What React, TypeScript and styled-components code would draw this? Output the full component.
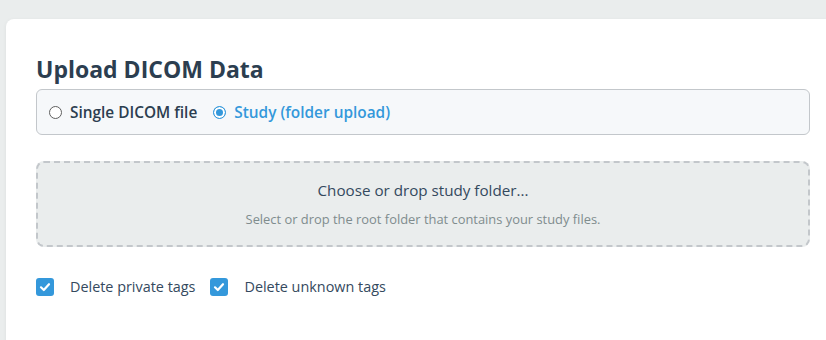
import React from "react";
import styled, { createGlobalStyle } from "styled-components";

const Global = createGlobalStyle`
  html, body { margin: 0; padding: 0; background: #eaeded; }
  body { font-family: "Open Sans", "Noto Sans", sans-serif; color: #2c3e50; }
`;

const Page = styled.div`
  padding: 19px 0 0 6px;
  height: 340px;
  box-sizing: border-box;
  overflow: hidden;
`;

const Card = styled.div`
  background: #ffffff;
  border-radius: 8px 0 0 0;
  box-shadow: 0 1px 4px rgba(0, 0, 0, 0.06);
  padding: 36px 16px 60px 30px;
  min-height: 400px;
  box-sizing: border-box;
`;

const Title = styled.h2`
  margin: 0 0 6px;
  font-size: 23px;
  font-weight: 700;
  line-height: 28px;
  color: #2c3e50;
`;

const ModeBox = styled.div`
  display: flex;
  align-items: center;
  gap: 16px;
  height: 46px;
  box-sizing: border-box;
  padding: 0 12px;
  border: 1px solid #c3c7cb;
  border-radius: 6px;
  background: #f6f8fa;
`;

const RadioLabel = styled.label<{ $active?: boolean }>`
  display: flex;
  align-items: center;
  gap: 8px;
  font-size: 15.4px;
  font-weight: 600;
  color: ${(p) => (p.$active ? "#3498db" : "#2c3e50")};
`;

const RadioDot = styled.span<{ $checked?: boolean }>`
  width: 13px;
  height: 13px;
  border-radius: 50%;
  box-sizing: border-box;
  border: 1px solid ${(p) => (p.$checked ? "#3498db" : "#5f5f5f")};
  background: ${(p) => (p.$checked ? "#3498db" : "#fff")};
  box-shadow: ${(p) => (p.$checked ? "inset 0 0 0 2px #fff" : "none")};
`;

const DropZone = styled.div`
  margin-top: 26px;
  height: 86px;
  box-sizing: border-box;
  border: 2px dashed #c3c7cb;
  border-radius: 8px;
  background: #eaeded;
  display: flex;
  flex-direction: column;
  align-items: center;
  justify-content: center;
  gap: 10px;
`;

const DropTitle = styled.div`
  font-size: 15.2px;
  color: #34495e;
`;

const DropHint = styled.div`
  font-size: 12.9px;
  color: #7f8c8d;
`;

const Options = styled.div`
  display: flex;
  align-items: center;
  margin-top: 30px;
  gap: 15px;
`;

const CheckLabel = styled.label`
  display: flex;
  align-items: center;
  gap: 16px;
  font-size: 14.4px;
  color: #34495e;
`;

const CheckBox = styled.span`
  width: 18px;
  height: 18px;
  border-radius: 3px;
  background: #3498db;
  display: flex;
  align-items: center;
  justify-content: center;
`;

const Check = () => (
  <CheckBox>
    <svg width="12" height="12" viewBox="0 0 12 12">
      <path d="M2 6.3 L4.8 9 L10 3.2" fill="none" stroke="#fff" strokeWidth="2.2" strokeLinecap="round" strokeLinejoin="round" />
    </svg>
  </CheckBox>
);

export default function App() {
  return (
    <Page>
      <Global />
      <Card>
        <Title>Upload DICOM Data</Title>
        <ModeBox>
          <RadioLabel>
            <RadioDot />
            Single DICOM file
          </RadioLabel>
          <RadioLabel $active>
            <RadioDot $checked />
            Study (folder upload)
          </RadioLabel>
        </ModeBox>
        <DropZone>
          <DropTitle>Choose or drop study folder...</DropTitle>
          <DropHint>Select or drop the root folder that contains your study files.</DropHint>
        </DropZone>
        <Options>
          <CheckLabel>
            <Check />
            Delete private tags
          </CheckLabel>
          <CheckLabel>
            <Check />
            Delete unknown tags
          </CheckLabel>
        </Options>
      </Card>
    </Page>
  );
}
